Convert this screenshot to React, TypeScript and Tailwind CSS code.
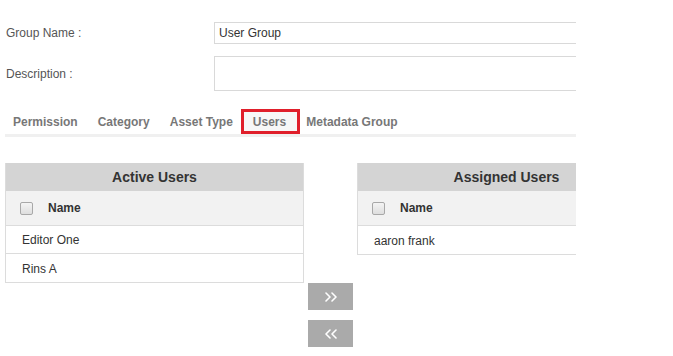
import { Fragment } from "react"

const font = { fontFamily: '"Liberation Sans", Arial, sans-serif' }

function Chevrons({ dir }: { dir: "right" | "left" }) {
  const pts =
    dir === "right"
      ? ["1,1 5,5 1,9", "7,1 11,5 7,9"]
      : ["5,1 1,5 5,9", "11,1 7,5 11,9"]
  return (
    <svg width="12" height="10" viewBox="0 0 12 10" fill="none">
      {pts.map((p) => (
        <polyline key={p} points={p} stroke="white" strokeWidth="1.6" strokeLinecap="round" strokeLinejoin="round" />
      ))}
    </svg>
  )
}

function UserTable({ title, rows }: { title: string; rows: string[] }) {
  return (
    <div className="w-[299px] shrink-0 border border-[#dcdcdc] border-t-0">
      <div className="h-[28px] bg-[#d4d4d4] flex items-center justify-center text-[14px] font-bold text-[#333]">
        {title}
      </div>
      <div className="h-[35px] bg-[#f2f2f2] border-b border-[#dcdcdc] flex items-center pl-[14px]">
        <span className="w-[13px] h-[13px] rounded-[2px] border border-[#a8a8a8] bg-gradient-to-b from-[#f4f4f4] to-[#dedede]" />
        <span className="ml-[15px] text-[12px] font-bold text-[#333]">Name</span>
      </div>
      {rows.map((r, i) => (
        <Fragment key={r}>
          <div
            className={
              "h-[28px] flex items-center pl-[16px] pt-px text-[12px] text-[#333] " +
              (i < rows.length - 1 ? "border-b border-[#dcdcdc]" : "")
            }
          >
            {r}
          </div>
        </Fragment>
      ))}
    </div>
  )
}

export default function App() {
  return (
    <div className="w-[673px] h-[356px] bg-white" style={font}>
      <div className="w-[576px] overflow-hidden pt-[22px]">
        <div className="flex items-center">
          <label className="w-[214px] shrink-0 pl-[6px] text-[12px] text-[#555]">Group Name :</label>
          <div className="w-[400px] shrink-0 h-[22px] border border-[#d9d9d9] flex items-center pl-[4px] text-[12px] text-[#333]">
            User Group
          </div>
        </div>
        <div className="flex items-center mt-[12px]">
          <label className="w-[214px] shrink-0 pl-[6px] text-[12px] text-[#555]">Description :</label>
          <div className="w-[400px] shrink-0 h-[35px] border border-[#d9d9d9]" />
        </div>

        <div className="ml-[5px] mt-[18px]">
          <div className="flex items-stretch text-[12px] font-bold text-[#777] h-[25px]">
            <span className="flex items-center px-2">Permission</span>
            <span className="flex items-center ml-[4px] px-2">Category</span>
            <span className="flex items-center ml-[4px] px-2">Asset Type</span>
            <span className="flex items-center border-[3px] border-[#e01f2b] bg-[#f7f7f7] pl-[9px] pr-[11px]">
              Users
            </span>
            <span className="flex items-center pl-[6px]">Metadata Group</span>
          </div>
          <div className="h-[3px] bg-[#f0f0f0]" />
        </div>

        <div className="flex items-start ml-[5px] mt-[26px]">
          <UserTable title="Active Users" rows={["Editor One", "Rins A"]} />
          <div className="w-[53px] shrink-0 flex flex-col items-center pt-[120px] gap-[10px]">
            <button className="w-[45px] h-[27px] bg-[#aaaaaa] flex items-center justify-center">
              <Chevrons dir="right" />
            </button>
            <button className="w-[45px] h-[27px] bg-[#aaaaaa] flex items-center justify-center">
              <Chevrons dir="left" />
            </button>
          </div>
          <UserTable title="Assigned Users" rows={["aaron frank"]} />
        </div>
      </div>
    </div>
  )
}
